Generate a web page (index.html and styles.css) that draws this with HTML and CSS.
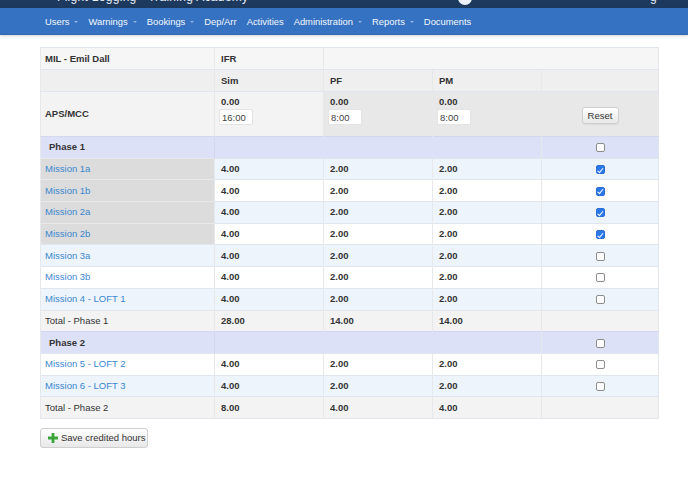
FILE: index.html
```html
<!DOCTYPE html>
<html>
<head>
<meta charset="utf-8">
<link rel="stylesheet" href="styles.css">
</head>
<body>
<div class="topbar">
  <span class="brand">Flight Logging · Training Academy</span>
  <span class="globe"></span>
  <span class="user-g">g</span>
</div>
<nav class="navbar">
  <a class="nav-item dd">Users</a>
  <a class="nav-item dd">Warnings</a>
  <a class="nav-item dd">Bookings</a>
  <a class="nav-item">Dep/Arr</a>
  <a class="nav-item">Activities</a>
  <a class="nav-item dd">Administration</a>
  <a class="nav-item dd">Reports</a>
  <a class="nav-item">Documents</a>
</nav>
<main class="content">
  <table class="hours">
    <colgroup>
      <col class="c1"><col class="c2"><col class="c3"><col class="c4"><col class="c5">
    </colgroup>
    <tr class="h1">
      <th>MIL - Emil Dall</th>
      <th>IFR</th>
      <th colspan="3"></th>
    </tr>
    <tr class="h2">
      <th></th>
      <th>Sim</th>
      <th>PF</th>
      <th>PM</th>
      <th></th>
    </tr>
    <tr class="aps">
      <th>APS/MCC</th>
      <td class="val"><b>0.00</b><span class="inp">16:00</span></td>
      <td class="val dk"><b>0.00</b><span class="inp">8:00</span></td>
      <td class="val dk"><b>0.00</b><span class="inp">8:00</span></td>
      <td class="dk ctr"><span class="btn reset">Reset</span></td>
    </tr>
    <tr class="phase">
      <th>Phase 1</th>
      <td colspan="3"></td>
      <td class="ctr"><span class="cb"></span></td>
    </tr>
    <tr class="alt"><td class="done"><a>Mission 1a</a></td><td>4.00</td><td>2.00</td><td>2.00</td><td class="ctr"><span class="cb on"></span></td></tr>
    <tr><td class="done"><a>Mission 1b</a></td><td>4.00</td><td>2.00</td><td>2.00</td><td class="ctr"><span class="cb on"></span></td></tr>
    <tr class="alt"><td class="done"><a>Mission 2a</a></td><td>4.00</td><td>2.00</td><td>2.00</td><td class="ctr"><span class="cb on"></span></td></tr>
    <tr><td class="done"><a>Mission 2b</a></td><td>4.00</td><td>2.00</td><td>2.00</td><td class="ctr"><span class="cb on"></span></td></tr>
    <tr class="alt"><td><a>Mission 3a</a></td><td>4.00</td><td>2.00</td><td>2.00</td><td class="ctr"><span class="cb"></span></td></tr>
    <tr><td><a>Mission 3b</a></td><td>4.00</td><td>2.00</td><td>2.00</td><td class="ctr"><span class="cb"></span></td></tr>
    <tr class="alt"><td><a>Mission 4 - LOFT 1</a></td><td>4.00</td><td>2.00</td><td>2.00</td><td class="ctr"><span class="cb"></span></td></tr>
    <tr class="total"><td>Total - Phase 1</td><td>28.00</td><td>14.00</td><td>14.00</td><td></td></tr>
    <tr class="phase">
      <th>Phase 2</th>
      <td colspan="3"></td>
      <td class="ctr"><span class="cb"></span></td>
    </tr>
    <tr><td><a>Mission 5 - LOFT 2</a></td><td>4.00</td><td>2.00</td><td>2.00</td><td class="ctr"><span class="cb"></span></td></tr>
    <tr class="alt"><td><a>Mission 6 - LOFT 3</a></td><td>4.00</td><td>2.00</td><td>2.00</td><td class="ctr"><span class="cb"></span></td></tr>
    <tr class="total"><td>Total - Phase 2</td><td>8.00</td><td>4.00</td><td>4.00</td><td></td></tr>
  </table>
  <div class="actions">
    <span class="btn save">
      <svg class="plus" width="10" height="10" viewBox="0 0 10 10"><path d="M3.6 0h2.8v3.6H10v2.8H6.4V10H3.6V6.4H0V3.6h3.6z" fill="#3aa63a"/></svg>
      Save credited hours
    </span>
  </div>
</main>
</body>
</html>
```

FILE: styles.css
```css
* { box-sizing: border-box; }
html, body { margin: 0; padding: 0; background: #fff; }
body {
  font-family: "Liberation Sans", Arial, Helvetica, sans-serif;
  font-size: 9.5px;
  color: #333;
}
.topbar {
  height: 8px;
  background: #1d3a5e;
  display: flex;
  align-items: flex-end;
  overflow: hidden;
  color: #e8eef6;
}
.brand {
  width: 458px;
  padding-left: 57px;
  font-size: 12px;
  line-height: 13px;
  margin-bottom: 4.5px;
  letter-spacing: 0.3px;
  white-space: nowrap;
  overflow: hidden;
}
.globe {
  width: 14px; height: 14px;
  border-radius: 50%;
  background: #eef2f8;
  margin-bottom: 3px;
}
.user-g {
  font-size: 12px;
  line-height: 13px;
  margin-left: 178px;
  margin-bottom: 4.5px;
}
.navbar {
  height: 27px;
  background: #3572c2;
  display: flex;
  align-items: center;
  padding-left: 45px;
  box-shadow: 0 1px 3px rgba(0,0,0,0.18);
  border-bottom: 1px solid #2f66ad;
}
.nav-item {
  color: #f4f7fc;
  font-size: 9.4px;
  margin-right: 10px;
  display: flex;
  align-items: center;
}
.nav-item.dd::after {
  content: "";
  border-left: 2.5px solid transparent;
  border-right: 2.5px solid transparent;
  border-top: 2.5px solid #93b2dd;
  margin-left: 5px;
  margin-top: 1px;
}
.content { padding: 12px 30px 0 40px; }
.hours {
  border-collapse: collapse;
  width: 618px;
  table-layout: fixed;
  border: 1px solid #e3e6ea;
}
col.c1 { width: 174px; }
col.c2 { width: 109px; }
col.c3 { width: 109px; }
col.c4 { width: 109px; }
col.c5 { width: 117px; }
.hours th, .hours td {
  height: 21.7px;
  padding: 0 6px;
  text-align: left;
  vertical-align: middle;
  border-top: 1px solid #e1e6ee;
  border-left: 1px solid #e6e8eb;
  font-weight: bold;
  line-height: 12px;
  white-space: nowrap;
}
.hours tr > :first-child { padding-left: 4px; }
.h1 th { background: #f6f6f6; height: 22px; }
.h2 th { background: #efefef; height: 22px; }
.aps th, .aps td { background: #f3f3f3; height: 45px; }
.aps td.dk { background: #e8e8e8; }
.aps td.val { vertical-align: top; padding-top: 4px; }
.aps td b { display: block; }
.inp {
  display: block;
  width: 34px;
  height: 16px;
  background: #fff;
  border: 1px solid #e4e4e4;
  border-radius: 2px;
  font-weight: normal;
  padding: 2px 0 0 2px;
  line-height: 12px;
  color: #444;
  margin: 1px 0 0 -2px;
}
.ctr { text-align: center !important; }
.btn {
  display: inline-block;
  background: linear-gradient(#ffffff, #e8e8e8);
  border: 1px solid #cfcfcf;
  border-radius: 3px;
  font-weight: normal;
  color: #333;
  box-shadow: 0 1px 1px rgba(0,0,0,0.06);
}
.reset {
  width: 37px;
  height: 17px;
  line-height: 15px;
  text-align: center;
  margin-top: 3px;
}
.phase th, .phase td { background: #dde1f8; border-top-color: #d3d8ef; }
.phase th { padding-left: 8px !important; }
.phase td[colspan] { border-left-color: #d3d8ef; }
.hours tr.alt td { background: #edf4fb; }
.hours td.done, .hours tr.alt td.done { background: #dcdcdc; border-top-color: #e6e8ec; }
.hours a { color: #3a87cf; font-weight: normal; }
.total td { background: #f3f3f3; }
.total td:first-child { font-weight: normal; }
.cb {
  display: inline-block;
  width: 9px;
  height: 9px;
  border: 1px solid #8c8c8c;
  border-radius: 2px;
  background: #fff;
  vertical-align: middle;
  position: relative;
}
.cb.on {
  background: #2b78e8;
  border-color: #2b6fd6;
}
.cb.on::after {
  content: "";
  position: absolute;
  left: 2.5px;
  top: 0.5px;
  width: 2px;
  height: 4.5px;
  border-right: 1.3px solid #fff;
  border-bottom: 1.3px solid #fff;
  transform: rotate(40deg);
}
.actions { margin-top: 9px; }
.save {
  height: 20px;
  width: 108px;
  display: inline-flex;
  align-items: center;
  padding-left: 7px;
  gap: 3px;
  font-size: 9.5px;
}
```
